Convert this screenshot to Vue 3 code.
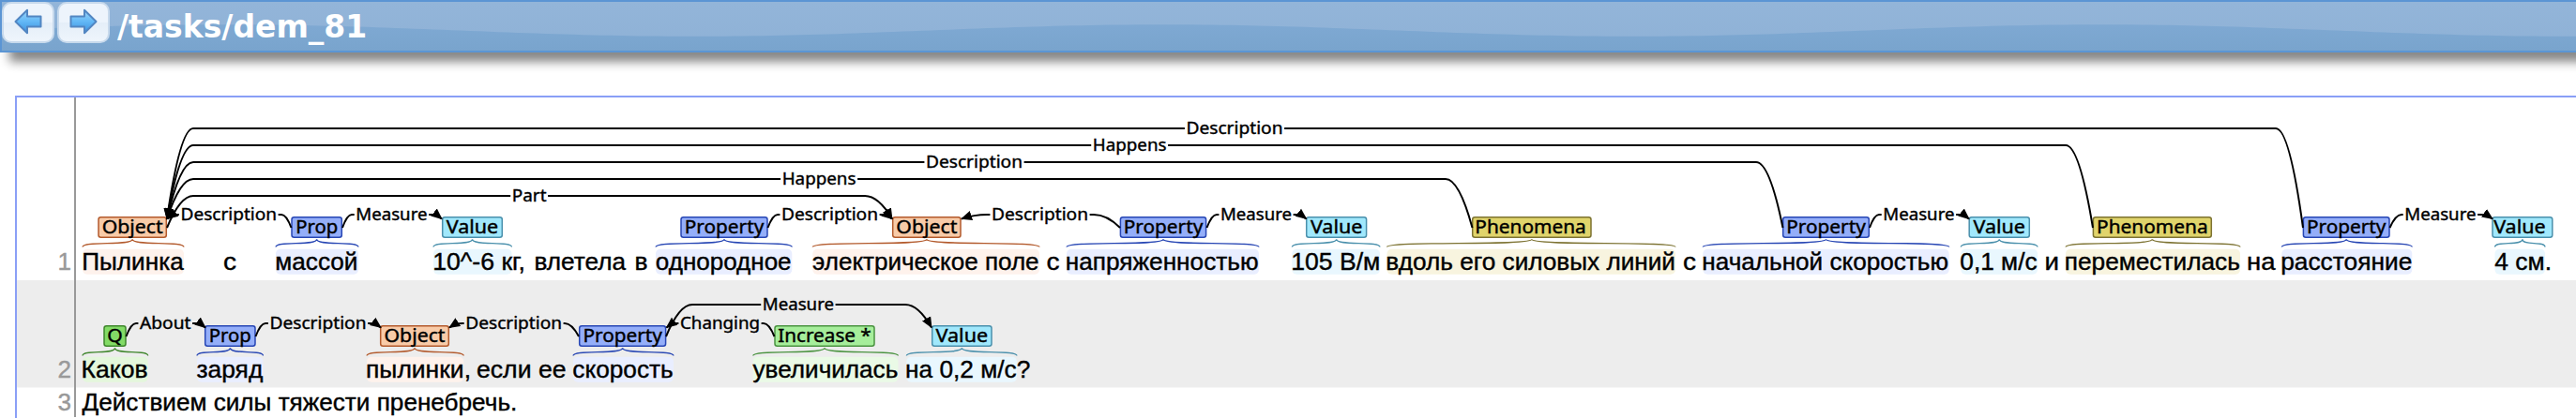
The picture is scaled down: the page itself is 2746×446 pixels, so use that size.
<script setup>
const palette = {
  object: { fill: '#f8cba8', stroke: '#b35a2c', tint: '#fef2ec' },
  property: { fill: '#94aef9', stroke: '#2746b4', tint: '#e9eeff' },
  value: { fill: '#a0e8fc', stroke: '#4a90ac', tint: '#e9f7fe' },
  phenomena: { fill: '#e0d46b', stroke: '#7d7332', tint: '#f8f4df' },
  question: { fill: '#83db66', stroke: '#3f862c', tint: '#e4f7dc' },
  increase: { fill: '#a6ee9b', stroke: '#4a9340', tint: '#eafae6' },
}

// base is the text baseline; shift moves span boxes and arcs down from the first row
const rows = [
  {
    number: 1, base: 288, shift: 0,
    words: [
      ['Пылинка', 87.2, 195.8], ['с', 238, 252], ['массой', 293.3, 381.5], ['10^-6 кг,', 461.2, 560],
      ['влетела', 569.5, 667], ['в', 676.5, 690.5], ['однородное', 698.8, 843.6], ['электрическое поле', 866, 1107.6],
      ['с', 1115.5, 1129.5], ['напряженностью', 1135.8, 1341.6], ['105 В/м', 1376.2, 1471.4],
      ['вдоль его силовых линий', 1477.2, 1786], ['с', 1794, 1808], ['начальной скоростью', 1814.3, 2077],
      ['0,1 м/с', 2089.3, 2171.6], ['и', 2179.5, 2195], ['переместилась', 2200.8, 2387.8],
      ['на', 2395, 2425.5], ['расстояние', 2431.2, 2571.3], ['4 см.', 2659.3, 2720],
    ],
    spans: [
      { label: 'Object', kind: 'object', box: [104.3, 178], text: [88, 196], w: 63.5 },
      { label: 'Prop', kind: 'property', box: [310.3, 365], text: [294, 382], w: 43.5 },
      { label: 'Value', kind: 'value', box: [471, 536], text: [462, 545.5], w: 54 },
      { label: 'Property', kind: 'property', box: [725.3, 818.7], text: [699, 844.3], w: 83 },
      { label: 'Object', kind: 'object', box: [951, 1024.7], text: [866.3, 1108], w: 63.5 },
      { label: 'Property', kind: 'property', box: [1193.7, 1286.3], text: [1137, 1342], w: 83 },
      { label: 'Value', kind: 'value', box: [1392, 1457.3], text: [1377.3, 1471], w: 54 },
      { label: 'Phenomena', kind: 'phenomena', box: [1569, 1696.7], text: [1478.5, 1786], w: 117, dx: -1.3 },
      { label: 'Property', kind: 'property', box: [1900, 1993], text: [1815.3, 2077.7], w: 83 },
      { label: 'Value', kind: 'value', box: [2098.5, 2164], text: [2090.3, 2172], w: 54 },
      { label: 'Phenomena', kind: 'phenomena', box: [2230.7, 2358], text: [2202, 2388], w: 117 },
      { label: 'Property', kind: 'property', box: [2454.7, 2547.7], text: [2432.3, 2571.3], w: 83 },
      { label: 'Value', kind: 'value', box: [2656.3, 2721.5], text: [2659.5, 2713], w: 54, dx: -3 },
    ],
    // from/to: edge of a box; a/b: ends of the level part on each side
    arcs: [
      { label: 'Description', y: 137, from: 2455, a: 2426, to: 178, b: 206, text: [1264.5, 1367.5] },
      { label: 'Happens', y: 155, from: 2231, a: 2202, to: 178, b: 206, text: [1164.8, 1243.5] },
      { label: 'Description', y: 173, from: 1900.5, a: 1872, to: 178, b: 206, text: [987, 1090] },
      { label: 'Happens', y: 191, from: 1569.5, a: 1541, to: 178, b: 206, text: [833.7, 912.5] },
      { label: 'Part', y: 209, from: 178, a: 206, to: 951, b: 922, text: [545.8, 582.5] },
      { label: 'Description', y: 229, from: 310.5, a: 300, to: 178.5, b: 190, text: [192.5, 295] },
      { label: 'Measure', y: 229, from: 365, a: 375, to: 471, b: 460, text: [379.3, 455.5] },
      { label: 'Description', y: 229, from: 818.5, a: 829, to: 951, b: 940, text: [833, 936] },
      { label: 'Description', y: 229, from: 1194, a: 1166, to: 1025, b: 1052, text: [1057, 1160] },
      { label: 'Measure', y: 229, from: 1286.5, a: 1297, to: 1392.5, b: 1381, text: [1301, 1377] },
      { label: 'Measure', y: 229, from: 1993, a: 2003, to: 2099, b: 2088, text: [2007.3, 2083.5] },
      { label: 'Measure', y: 229, from: 2547.5, a: 2560, to: 2657, b: 2644, text: [2563.3, 2639.5] },
    ],
  },
  {
    number: 2, base: 403, shift: 116,
    words: [
      ['Каков', 86.5, 157.5], ['заряд', 209.5, 280.3], ['пылинки,', 390, 502], ['если ее', 508, 603.5],
      ['скорость', 610.3, 717.7], ['увеличилась', 802.5, 957.3], ['на 0,2 м/с?', 965, 1098.3],
    ],
    spans: [
      { label: 'Q', kind: 'question', box: [110.3, 134.7], text: [88, 157.7], w: 15 },
      { label: 'Prop', kind: 'property', box: [218, 272.7], text: [210, 280.5], w: 43.5 },
      { label: 'Object', kind: 'object', box: [405, 479], text: [391, 494.3], w: 63.5 },
      { label: 'Property', kind: 'property', box: [617, 710.3], text: [611, 718], w: 83 },
      { label: 'Increase *', kind: 'increase', box: [825.3, 932.7], text: [802.7, 957.5], w: 98 },
      { label: 'Value', kind: 'value', box: [993, 1057.7], text: [966.3, 1084], w: 54 },
    ],
    arcs: [
      { label: 'Measure', y: 325, from: 710, a: 738, to: 993, b: 965, text: [812.8, 889] },
      { label: 'About', y: 345, from: 134.5, a: 145, to: 219, b: 208, text: [149, 203.5] },
      { label: 'Description', y: 345, from: 272.5, a: 283, to: 406, b: 394, text: [287.5, 390.5] },
      { label: 'Description', y: 345, from: 617, a: 602, to: 479, b: 493, text: [496.3, 599] },
      { label: 'Changing', y: 345, from: 825.5, a: 814, to: 710.5, b: 722, text: [725, 810] },
    ],
  },
  { number: 3, base: 438, shift: 0, words: [['Действием силы тяжести пренебречь.', 87.5, 551.3]], spans: [], arcs: [] },
]

const mid = ([a, b]) => (a + b) / 2

function brace(s, shift) {
  const [l, r] = s.text
  const m = mid(s.box)
  const lo = 263.5 + shift
  const hi = 255.3 + shift
  return `M${l} ${lo}C${l} ${lo - 7} ${m} ${hi + 7.4} ${m} ${hi}C${m} ${hi + 7.4} ${r} ${lo - 7} ${r} ${lo}`
}

function tail(a, shift) {
  const near = a.from > a.to ? a.text[1] + 1.6 : a.text[0] - 1.6
  return `M${a.from} ${243 + shift}Q${(a.from + a.a) / 2} ${a.y} ${a.a} ${a.y}H${near}`
}

function head(a, shift) {
  const near = a.from > a.to ? a.text[0] - 1.6 : a.text[1] + 1.6
  return `M${near} ${a.y}H${a.b}Q${(a.to + a.b) / 2} ${a.y} ${a.to} ${233.5 + shift}`
}

// Crests at x = 238 + 1000n, troughs half a period later
const wave = (() => {
  let d = 'M0 54'
  for (let x = 0; x <= 2750; x += 10) {
    d += `L${x} ${(30.5 - 6.3 * Math.cos(((x - 238) / 1000) * 2 * Math.PI)).toFixed(2)}`
  }
  return d + 'V54Z'
})()
</script>

<template>
  <div class="page">
    <header class="bar">
      <svg class="wave" width="2746" height="52" viewBox="0 0 2746 52">
        <defs>
          <linearGradient id="deep" x1="0" y1="22" x2="0" y2="52" gradientUnits="userSpaceOnUse">
            <stop offset="0" stop-color="#7fa9d3" />
            <stop offset="1" stop-color="#79a4cd" />
          </linearGradient>
        </defs>
        <path :d="wave" fill="url(#deep)" />
      </svg>
      <button v-for="dir in ['prev', 'next']" :key="dir" class="nav" :class="dir">
        <svg width="32" height="30" viewBox="0 0 32 30">
          <defs>
            <linearGradient :id="'g-' + dir" x1="0" y1="0" x2="0" y2="1">
              <stop offset="0" stop-color="#9bd3f8" />
              <stop offset=".5" stop-color="#62b8f6" />
              <stop offset="1" stop-color="#3c8fdc" />
            </linearGradient>
          </defs>
          <path d="M2.5 15L15 2.8V9.5H29.5V20.5H15V27.2Z" :fill="`url(#g-${dir})`" stroke="#5286c2" stroke-width="2" stroke-linejoin="round" />
        </svg>
      </button>
      <h1 class="title">/tasks/dem_81</h1>
    </header>

    <main class="doc">
      <svg class="canvas" width="2728" height="342" viewBox="18 104 2728 342">
        <defs>
          <marker id="tip" markerUnits="userSpaceOnUse" markerWidth="14" markerHeight="12" refX="11" refY="6" orient="auto">
            <path d="M0 0.8L12 6L0 11.2Z" />
          </marker>
        </defs>
        <rect x="18" y="299" width="2728" height="114.5" fill="#ededed" />
        <g v-for="row in rows" :key="row.number">
          <template v-for="(s, i) in row.spans" :key="i">
            <rect :x="s.text[0]" :y="row.base - 22.3" :width="s.text[1] - s.text[0]" height="27" rx="5" :fill="palette[s.kind].tint" />
            <path :d="brace(s, row.shift)" fill="none" :stroke="palette[s.kind].stroke" stroke-width="1.3" />
            <rect :x="s.box[0] + 0.7" :y="231.7 + row.shift" :width="s.box[1] - s.box[0] - 1.4" height="21.6" rx="2.5" :fill="palette[s.kind].fill" :stroke="palette[s.kind].stroke" stroke-width="1.5" />
            <text class="label" :x="mid(s.box) + (s.dx || 0)" :y="248.7 + row.shift" :textLength="s.w + 1.5" lengthAdjust="spacingAndGlyphs">{{ s.label }}</text>
          </template>
          <template v-for="(a, i) in row.arcs" :key="i">
            <path class="arc" :d="tail(a, row.shift)" />
            <path class="arc" :d="head(a, row.shift)" marker-end="url(#tip)" />
            <text class="relation" :x="mid(a.text)" :y="a.y + 6" :textLength="a.text[1] - a.text[0]" lengthAdjust="spacingAndGlyphs">{{ a.label }}</text>
          </template>
          <text v-for="([word, l, r], i) in row.words" :key="i" class="word" :x="l" :y="row.base" :textLength="r - l" lengthAdjust="spacingAndGlyphs">{{ word }}</text>
          <text class="number" x="76" :y="row.base">{{ row.number }}</text>
        </g>
        <rect x="79" y="104" width="2" height="341" fill="#999" />
      </svg>
    </main>
  </div>
</template>

<style>
body {
  background: #fff;
  overflow: hidden;
}
</style>

<style scoped>
.page {
  width: 2746px;
  height: 446px;
  overflow: hidden;
}
.bar {
  position: relative;
  box-sizing: border-box;
  width: 2780px;
  height: 56px;
  display: flex;
  align-items: flex-start;
  gap: 3px;
  border: 2px solid #5b95d4;
  background: linear-gradient(#93b5d9, #8eb1d6);
  box-shadow: 10px 10px 10px #888;
}
.wave {
  position: absolute;
  left: 0;
  top: 0;
}
.nav {
  position: relative;
  box-sizing: border-box;
  width: 56px;
  height: 44px;
  margin: 0;
  padding: 0 0 2px;
  display: flex;
  align-items: center;
  justify-content: center;
  border: 2px solid #c7d9ec;
  border-radius: 10px;
  background: linear-gradient(#edf4fc 0 50%, #e4eef8 50%, #eef5fc);
}
.next svg {
  transform: scaleX(-1);
}
.title {
  position: relative;
  margin: 0 0 0 5px;
  font: bold 33px/54px "DejaVu Sans", sans-serif;
  color: #fff;
}
.doc {
  box-sizing: border-box;
  margin: 46px 0 0 16px;
  width: 2760px;
  height: 360px;
  border: 2px solid #8a9ff6;
  background: #fff;
}
.canvas {
  display: block;
}
.arc {
  fill: none;
  stroke: #000;
  stroke-width: 2;
}
.word,
.number {
  font: 26px "Liberation Sans", Arial, sans-serif;
}
.word {
  stroke: #000;
  stroke-width: 0.4;
}
.number {
  fill: #999;
  stroke: #999;
  stroke-width: 0.4;
  text-anchor: end;
}
.label,
.relation {
  font-family: "Noto Sans", sans-serif;
  text-anchor: middle;
  stroke: #000;
  stroke-width: 0.4;
}
.label {
  font-size: 19px;
}
.relation {
  font-size: 17.5px;
}
</style>
